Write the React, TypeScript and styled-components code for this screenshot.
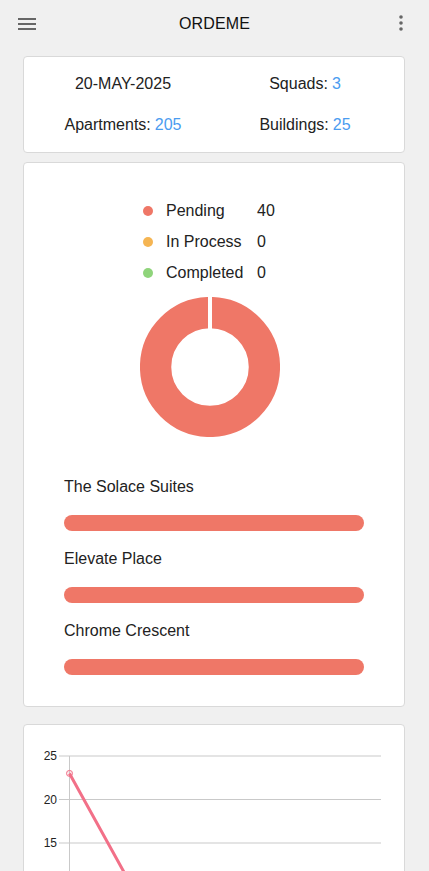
import React from 'react'
import styled, { createGlobalStyle } from 'styled-components'

const red = '#ef7767'
const blue = '#4a9cf0'

const GlobalStyle = createGlobalStyle`
  body {
    margin: 0;
    background: #f0f0f0;
    font-family: "Liberation Sans", Arial, sans-serif;
    color: #222;
  }
`

const legend = [
  { label: 'Pending', value: 40, color: red },
  { label: 'In Process', value: 0, color: '#f5b553' },
  { label: 'Completed', value: 0, color: '#8fd47b' },
]

const buildings = ['The Solace Suites', 'Elevate Place', 'Chrome Crescent']

const ticks = [25, 20, 15, 10, 5, 0]

const App = () => (
  <>
    <GlobalStyle />
    <Header>
      <MenuButton>
        <svg width="18" height="12" viewBox="0 0 18 12">
          <rect y="0" width="18" height="2" fill="#666" />
          <rect y="5" width="18" height="2" fill="#666" />
          <rect y="10" width="18" height="2" fill="#666" />
        </svg>
      </MenuButton>
      <Title>ORDEME</Title>
      <MoreButton>
        <svg width="4" height="16" viewBox="0 0 4 16">
          <circle cx="2" cy="2" r="1.8" fill="#666" />
          <circle cx="2" cy="8" r="1.8" fill="#666" />
          <circle cx="2" cy="14" r="1.8" fill="#666" />
        </svg>
      </MoreButton>
    </Header>

    <Main>
      <SummaryCard>
        <Stat>20-MAY-2025</Stat>
        <Stat>
          Squads: <Num>3</Num>
        </Stat>
        <Stat>
          Apartments: <Num>205</Num>
        </Stat>
        <Stat>
          Buildings: <Num>25</Num>
        </Stat>
      </SummaryCard>

      <StatusCard>
        <Legend>
          {legend.map((l) => (
            <LegendRow key={l.label}>
              <Dot $color={l.color} />
              <span>{l.label}</span>
              <span>{l.value}</span>
            </LegendRow>
          ))}
        </Legend>
        <Donut width="140" height="140" viewBox="0 0 140 140">
          <circle cx="70" cy="70" r="54.4" fill="none" stroke={red} strokeWidth="31.3" />
          <rect x="68" y="0" width="4" height="32" fill="#fff" />
        </Donut>
        <BuildingList>
          {buildings.map((b) => (
            <Building key={b}>
              <BuildingName>{b}</BuildingName>
              <Bar />
            </Building>
          ))}
        </BuildingList>
      </StatusCard>

      <ChartCard>
        <svg width="380" height="300" viewBox="0 0 380 300">
          {ticks.map((t, i) => {
            const y = 31 + i * 43.5
            return (
              <g key={t}>
                <line x1="35" x2="357" y1={y} y2={y} stroke="#c9c9c9" strokeWidth="1" />
                <AxisText x="33" y={y + 4} textAnchor="end">
                  {t}
                </AxisText>
              </g>
            )
          })}
          <line x1="45.5" x2="45.5" y1="31" y2="256" stroke="#c9c9c9" strokeWidth="1" />
          <polyline
            points="45.5,48.4 156,248.5 266,248.5"
            fill="none"
            stroke="#f27088"
            strokeWidth="3"
          />
          <circle cx="45.5" cy="48.4" r="3" fill="rgba(242,112,136,0.15)" stroke="#f27088" strokeWidth="1" />
        </svg>
      </ChartCard>
    </Main>
  </>
)

const Header = styled.header`
  height: 46px;
  display: grid;
  grid-template-columns: 1fr auto 1fr;
  align-items: center;
`

const MenuButton = styled.div`
  display: flex;
  padding-left: 18px;
  padding-top: 1px;
`

const MoreButton = styled.div`
  display: flex;
  justify-content: flex-end;
  padding-right: 26px;
`

const Title = styled.div`
  font-size: 16px;
  color: #111;
  letter-spacing: 0.1px;
  padding-top: 2px;
`

const Main = styled.main`
  padding: 10px 24px 0 23px;
`

const Card = styled.section`
  background: #fff;
  border: 1px solid #d9d9d9;
  border-radius: 4px;
`

const SummaryCard = styled(Card)`
  display: grid;
  grid-template-columns: 1fr 1fr;
  grid-auto-rows: 41px;
  padding: 6px 8px 7px;
`

const Stat = styled.div`
  display: flex;
  align-items: center;
  justify-content: center;
  font-size: 16px;
`

const Num = styled.span`
  color: ${blue};
  margin-left: 4px;
`

const StatusCard = styled(Card)`
  margin-top: 9px;
  padding: 32px 40px 31px;
`

const Legend = styled.div`
  margin-left: 79px;
`

const LegendRow = styled.div`
  display: grid;
  grid-template-columns: 10px 78px auto;
  column-gap: 13px;
  align-items: center;
  height: 31px;
  font-size: 16px;
  color: #222;
`

const Dot = styled.span<{ $color: string }>`
  width: 10px;
  height: 10px;
  border-radius: 50%;
  background: ${(p) => p.$color};
`

const Donut = styled.svg`
  display: block;
  margin: 9px 0 0 76px;
`

const BuildingList = styled.div`
  margin-top: 39px;
  display: flex;
  flex-direction: column;
  gap: 17px;
`

const Building = styled.div`
  display: flex;
  flex-direction: column;
  gap: 18px;
`

const BuildingName = styled.div`
  font-size: 16px;
  line-height: 20px;
  padding-top: 1px;
  color: #222;
`

const Bar = styled.div`
  height: 16px;
  border-radius: 8px;
  background: ${red};
`

const ChartCard = styled(Card)`
  margin-top: 17px;
  svg {
    display: block;
  }
`

const AxisText = styled.text`
  font-family: "Liberation Sans", Arial, sans-serif;
  font-size: 12px;
  fill: #222;
`

export default App
